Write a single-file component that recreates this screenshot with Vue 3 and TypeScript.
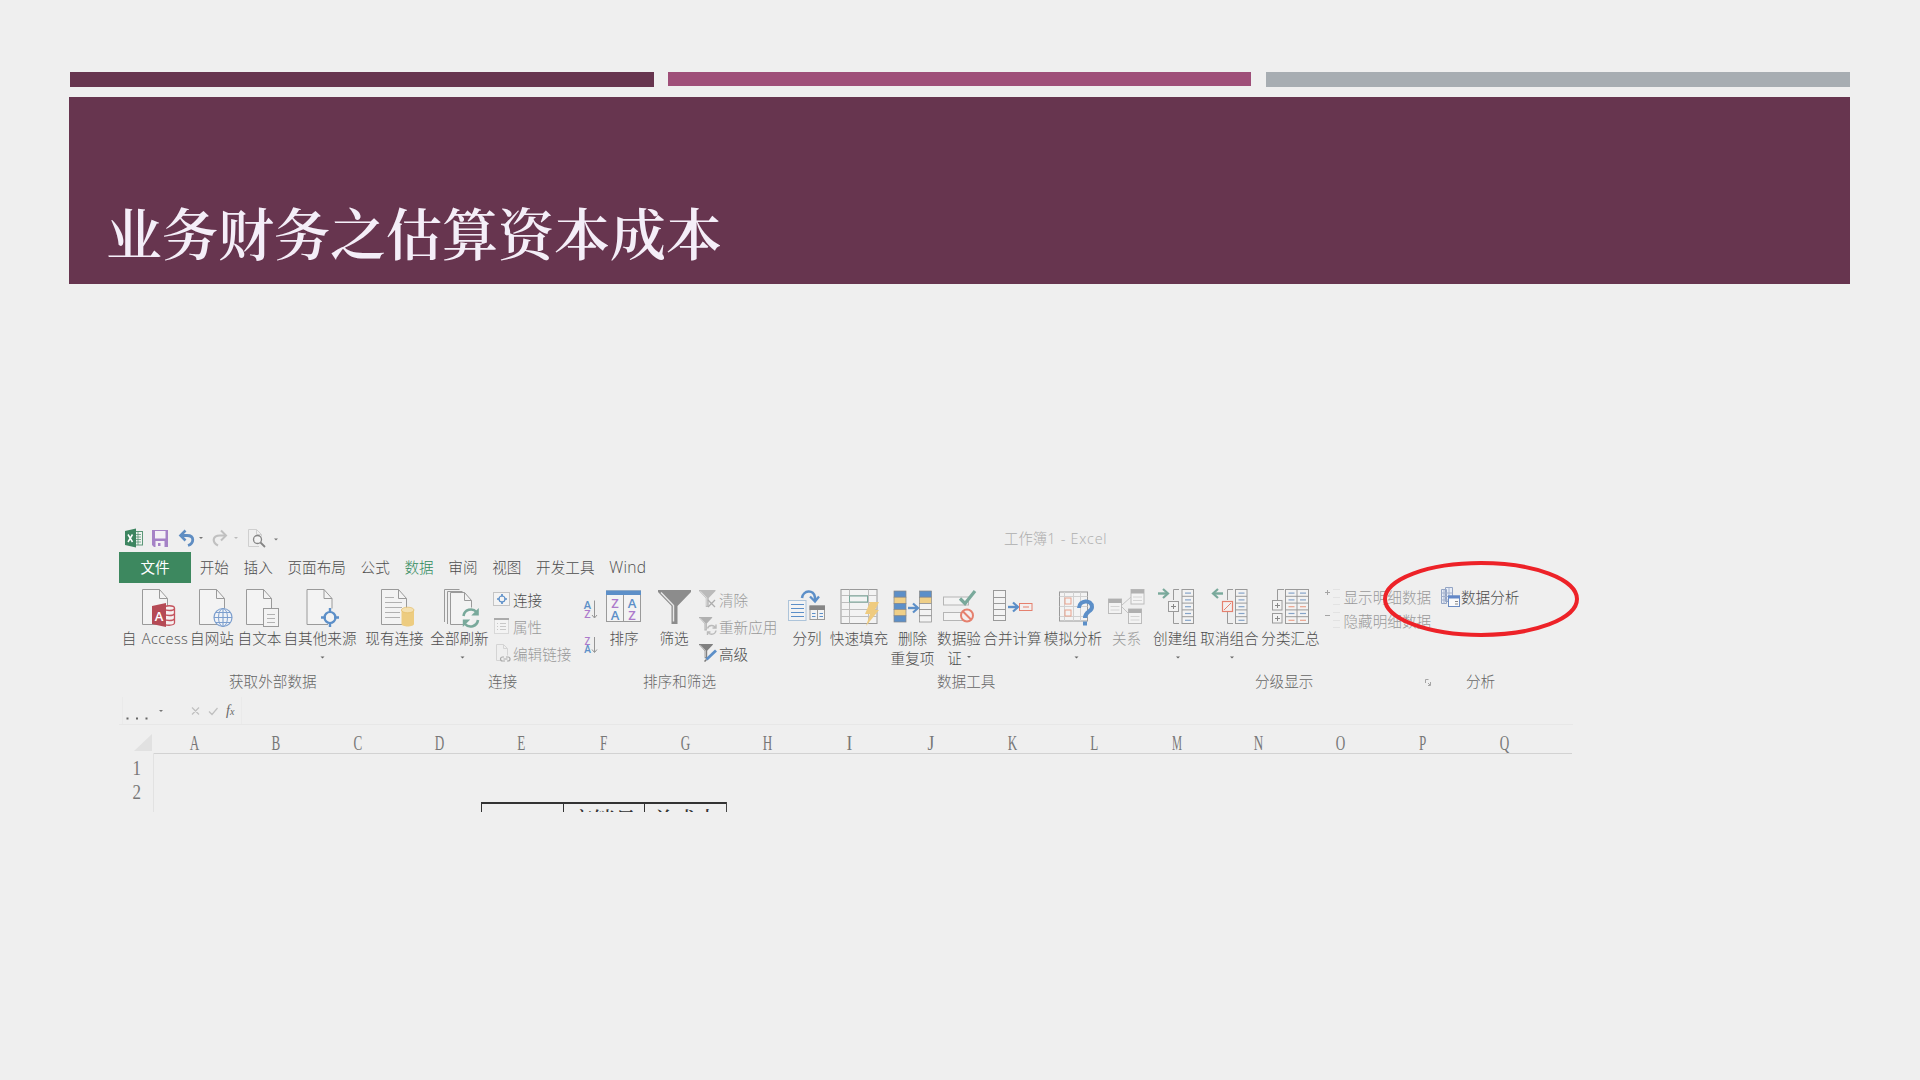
<script setup lang="ts">
interface Tool {
  x: number
  w: number
  label: string
  second?: string
  caret?: number
  dim?: boolean
  icon: string
}
interface SmallTool {
  label: string
  dim?: boolean
  icon: string
}

const GREY = '#9a9a9a'
const BLUE = '#5c8fc8'
const TEAL = '#79a99b'
const RED = '#e5806e'

const line = (d: string, color: string, width = 1) =>
  `<path d="${d}" fill="none" stroke="${color}" stroke-width="${width}"/>`
const box = (x: number, y: number, w: number, h: number, stroke: string, fill = '#f3f3f3', sw = 1) =>
  `<rect x="${x}" y="${y}" width="${w}" height="${h}" fill="${fill}" stroke="${stroke}" stroke-width="${sw}"/>`
const sheet = (x: number) =>
  `<path d="M${x} 589.5h17l8 9v26h-25z" fill="#f3f3f3" stroke="none"/>` +
  line(`M${x + 21} 624.5H${x}V589.5h17l8 9v10M${x + 17} 589.5v9h8`, GREY)
const letter = (ch: string, x: number, y: number, size: number, color: string) =>
  `<text x="${x}" y="${y}" font-family="Open Sans, sans-serif" font-size="${size}" font-weight="600" text-anchor="middle" fill="${color}">${ch}</text>`

const PURPLE = '#ac7acb'

const rowsBlock = (x: number, cols: number, colors: string[]) => {
  let s = box(x, 589.5, 11.5 * cols, 34, GREY)
  for (let i = 0; i < 5; i++) {
    const y = 589.5 + i * 6.8
    s += line(`M${x} ${y}h${11.5 * cols}`, GREY)
    for (let c = 0; c < cols; c++) s += line(`M${x + 3 + c * 11.5} ${y + 3.6}h6`, colors[i], 1.2)
  }
  return cols > 1 ? s + line(`M${x + 11.5} 589.5v34`, GREY) : s
}

const external: Tool[] = [
  {
    x: 122, w: 66, label: '自 Access',
    icon: sheet(142.5) +
      `<path d="M164 608v15c0 3 10 3 10.500 0v-15c0-3-10.500-3-10.500 0z" fill="#f5f0f0" stroke="#c4545e" stroke-width="1.300"/>` +
      line('M164 609c2 2 9 2 10.500 0M164 614c2 2 9 2 10.500 0M164 619c2 2 9 2 10.500 0', '#c4545e', 1.5) +
      `<path d="M152 606l14-3v24l-14-3z" fill="#b54a55"/>` + letter('A', 159, 620.5, 13, '#fff'),
  },
  {
    x: 188, w: 48, label: '自网站',
    icon: sheet(199.5) + `<circle cx="223" cy="617.500" r="9" fill="#f0f3f7" stroke="#7d9fce" stroke-width="1.200"/><ellipse cx="223" cy="617.500" rx="4.500" ry="9" fill="none" stroke="#7d9fce"/>` +
      line('M214 617.5h18M223 608.5v18M215.500 612.500h15M215.500 622.500h15', '#7d9fce', 1.1),
  },
  {
    x: 236, w: 47, label: '自文本',
    icon: sheet(246.5) + box(263.5, 608.5, 15, 18, GREY) + line('M267 614.5h8M267 618.500h8M267 622.500h8', '#b2b2b2'),
  },
  {
    x: 283, w: 74, label: '自其他来源', caret: 322.5,
    icon: sheet(307) + `<circle cx="330" cy="617.500" r="5.500" fill="#f3f3f3" stroke="${BLUE}" stroke-width="2.200"/>` +
      line('M330 608v5M330 622v5M321 617.500h5M334 617.500h5', BLUE, 2.4),
  },
  {
    x: 357, w: 75, label: '现有连接',
    icon: sheet(381.5) + line('M385 597.500h9M385 602.500h17M385 607.500h17M385 612.500h15M385 617.500h15', '#b0b0b0') +
      `<path d="M401.500 610v14c0 3.300 12.500 3.300 12.500 0v-14z" fill="#edcc80"/><ellipse cx="407.700" cy="610" rx="6.300" ry="2.800" fill="#f4e0b0" stroke="#e5bd65" stroke-width=".7"/>`,
  },
  {
    x: 432, w: 55, label: '全部刷新', caret: 462.5,
    icon: line('M444.500 622V589.500h15M447.500 624V591.500h15', GREY) +
      `<path d="M450.500 593.500h14l7 8v23h-21z" fill="#f3f3f3"/>` + line('M463 624.500H450.500V592.500h14l7 8v7M464.500 592.500v8h7', GREY) +
      line('M463.500 616a7.500 7.500 0 0 1 13-4M478 620a7.500 7.500 0 0 1-13 4', TEAL, 2.6) +
      `<path d="M478.800 608v7.500h-7.500zM462.800 627v-7.500h7.500z" fill="${TEAL}"/>`,
  },
]

const funnel = (x: number, y: number, s: number, color: string) =>
  `<path d="M${x} ${y}h${33 * s}v${2 * s}l${-13.5 * s} ${14 * s}v${18 * s}h${-6 * s}v${-18 * s}l${-13.5 * s} ${-14 * s}z" fill="${color}"/>` +
  line(`M${x + 3 * s} ${y + 2.5 * s}l${12.5 * s} ${13 * s}v${16 * s}`, '#e8e8e8', 1.4 * s)

const links: SmallTool[] = [
  {
    label: '连接',
    icon: box(0.5, 2.5, 16, 13, '#c4c4c4') + `<circle cx="9" cy="9" r="3" fill="none" stroke="${BLUE}" stroke-width="1.100"/>` +
      line('M9 4v2.500M9 11.500v2.500M4 9h2.500M11.500 9h2.500', BLUE, 1.7),
  },
  { label: '属性', dim: true, icon: box(1.5, 1.5, 14, 15, '#d8d8d8') + line('M1 2h15', '#ababab', 2) + line('M4 6.500h1M7 6.500h6M4 9.500h1M7 9.500h6M4 12.500h1M7 12.500h6', '#c8c8c8') },
  { label: '编辑链接', dim: true, icon: line('M7 16.500H3.500V.5h7l4 4v7M10.500 .5v4h4', '#d4d4d4') + line('M11 13H9.500a2 2 0 0 0 0 4H12M13 13h2a2 2 0 0 1 0 4h-1M10.500 15h4', '#a9a9a9', 1.2) },
]
const filters: SmallTool[] = [
  { label: '清除', dim: true, icon: funnel(0, 0, 0.5, '#bababa') + line('M9 10l7 7M16 10l-7 7', '#adadad', 1.3) },
  { label: '重新应用', dim: true, icon: funnel(0, 0, 0.4, '#b0b0b0') + line('M8.500 11.500a4.300 4.300 0 0 1 8-.5M17 13.500a4.300 4.300 0 0 1-8 1.500M17 7.500v3.500h-3.500M8.500 18v-3h3', '#bababa', 1.4) },
  { label: '高级', icon: funnel(0, 0, 0.42, '#808080') + line('M7.500 15.500L17 6.500', BLUE, 2.8) + line('M5.500 17.500l2-2', '#777', 1.5) },
]

const sorters: Tool[] = [
  {
    x: 600, w: 48, label: '排序',
    icon: box(606.5, 591, 34, 30.500, '#9a9a9a') + `<rect x="606" y="590.500" width="35" height="4.500" fill="${BLUE}"/>` + line('M623.500 595v26.500', '#9a9a9a') +
      `<g font-weight="400">` + letter('Z', 615, 607.5, 13, PURPLE) + letter('A', 615, 619.5, 13, BLUE) + letter('A', 632, 607.5, 13, BLUE) + letter('Z', 632, 619.5, 13, PURPLE) + `</g>`,
  },
  { x: 648, w: 52, label: '筛选', icon: funnel(658, 590, 1, '#8c8c8c') },
]

const arrow = (x: number, y: number, color: string, dir = 1) =>
  line(`M${x} ${y}h${10 * dir}`, color, 2.4) + line(`M${x + 5 * dir} ${y - 4.5}l${5 * dir} 4.500l${-5 * dir} 4.500`, color, 2.2)

const stripes = (x: number, fills: string[]) =>
  fills.map((f, i) => box(x, 591 + i * 6.2, 12, 6.2, '#888', f, 0.7)).join('')

const dataTools: Tool[] = [
  {
    x: 785, w: 44, label: '分列',
    icon: box(788.5, 600.5, 17.5, 20, '#adc4da') + line('M791 604.500h13M791 608.500h13M791 612.500h13M791 616.500h13', BLUE, 1.1) +
      box(810, 606, 14.500, 13.500, GREY) + `<rect x="809.500" y="605.500" width="15.500" height="4.500" fill="#858585"/>` + line('M817.500 610v9', GREY) + line('M812 613.500h3.500M819.500 613.500h3.500M812 616.500h3.500M819.500 616.500h3.500', BLUE) +
      line('M802 598c1-8 12-9 13-.5v3', BLUE, 2.6) + line('M810 596.500l5 5 4-5', BLUE, 2.3),
  },
  {
    x: 829, w: 60, label: '快速填充',
    icon: box(841, 589.500, 36, 34, GREY) + line('M841 595.500h36M841 602.500h36M841 609.500h36M841 616.500h36M849.500 589.500v34M868.500 589.500v34', '#bdbdbd') +
      box(849.5, 596, 18, 6, TEAL) + `<path d="M870 602h9l-4 8h4l-13 16 4-12h-5z" fill="#efcb7f"/>`,
  },
  {
    x: 889, w: 47, label: '删除', second: '重复项',
    icon: stripes(894, [BLUE, '#efcf88', BLUE, '#efcf88', BLUE]) + stripes(919.5, [BLUE, '#efcf88', '#f3f3f3', '#f3f3f3', '#f3f3f3']) + arrow(908, 608, BLUE),
  },
  {
    x: 936, w: 46, label: '数据验', second: '证',
    icon: box(943.5, 597, 25, 8, '#b5b5b5') + box(943.5, 612.5, 25, 8, '#b5b5b5') + line('M960 598.500l5 5L975 591', TEAL, 3.2) +
      `<circle cx="967" cy="615.500" r="6" fill="#f4eeee" stroke="${RED}" stroke-width="2"/>` + line('M963 611.500l8 8', RED, 2),
  },
  {
    x: 982, w: 61, label: '合并计算',
    icon: box(993.5, 590.5, 12, 30, GREY) + line('M993.500 597.500h12M993.500 603.500h12M993.500 609.500h12M993.500 615.500h12', GREY) + arrow(1008, 607, BLUE) +
      box(1019.5, 603.5, 12.5, 7, RED, '#f3efee', 1) + line('M1023 607h6', RED),
  },
  {
    x: 1043, w: 60, label: '模拟分析', caret: 1076.5,
    icon: box(1059.5, 592, 28, 29, GREY) + line('M1059.500 596.500h28M1059.500 606.500h28M1059.500 616.500h28M1064.500 592v29M1073.500 592v29M1080.500 592v29', '#d0d0d0') +
      box(1065, 598, 6, 6, '#eaa28c') + box(1065, 610, 6, 6, '#eaa28c') + line('M1079 608c0-8 13-9 13-1 0 5-7 4-7 11', BLUE, 4) + `<rect x="1083" y="621.500" width="4" height="4" fill="${BLUE}"/>`,
  },
  {
    x: 1103, w: 47, label: '关系', dim: true,
    icon: [[1108.5, 599], [1131, 589.5], [1128.5, 609]].map(([x, y]) => box(x, y, 13, 14.5, '#bcbcbc') + `<rect x="${x}" y="${y}" width="13" height="4" fill="#b0b0b0"/>` + line(`M${x + 2} ${y + 7.5}h9M${x + 2} ${y + 11}h9`, '#d4d4d4')).join('') +
      line('M1122 605l9-8M1122 607l7 7', '#c4c4c4'),
  },
]

const B = '#84a3c8'
const outline: Tool[] = [
  {
    x: 1150, w: 50, label: '创建组', caret: 1178,
    icon: arrow(1158, 593.5, TEAL) + line('M1179 589.500h-5.500V600M1179 623.500h-5.500V612', GREY) + box(1168.5, 601.5, 10, 10, GREY) + line('M1171 606.500h5M1173.500 604v5', '#888') + rowsBlock(1182, 1, [B, B, B, B, B]),
  },
  {
    x: 1200, w: 59, label: '取消组合', caret: 1232,
    icon: arrow(1223, 593.5, TEAL, -1) + line('M1233 589.500h-5.500V600M1233 623.500h-5.500V612', GREY) + box(1222.5, 601.5, 10, 10, RED, '#f3efee', 1.2) + line('M1224 610l7-7', RED) + rowsBlock(1235.5, 1, [B, B, B, B, B]),
  },
  {
    x: 1259, w: 63, label: '分类汇总',
    icon: line('M1284 589.500h-6.500V600', GREY) + box(1272.5, 600.5, 9.5, 9.5, GREY) + box(1272.5, 613.5, 9.5, 9.5, GREY) + line('M1275 605.500h5M1277.500 603v5M1275 618.500h5M1277.500 616v5', '#888') + rowsBlock(1285.5, 2, [B, B, '#eaa28c', B, '#eaa28c']),
  },
]

const details: SmallTool[] = [
  { label: '显示明细数据', dim: true, icon: line('M1 4.500h5M3.500 2v5', '#a5a5a5') + line('M9 1.500h7M9 9.500h7M9 16.500h7', '#e2e2e2') },
  { label: '隐藏明细数据', dim: true, icon: line('M1 4.500h5', '#a5a5a5') + line('M9 1.500h7M9 9.500h7M9 16.500h7', '#e2e2e2') },
]

const tabs = ['开始', '插入', '页面布局', '公式', '数据', '审阅', '视图', '开发工具', 'Wind']
const groups = [
  { name: '获取外部数据', left: 229, w: 259 },
  { name: '连接', left: 488, w: 155 },
  { name: '排序和筛选', left: 643, w: 294 },
  { name: '数据工具', left: 937, w: 318 },
  { name: '分级显示', left: 1255, w: 169 },
]
const columns = 'ABCDEFGHIJKLMNOPQ'.split('')
const squeeze = (c: string) => (c === 'I' || c === 'J' ? 0.85 : c === 'M' ? 0.55 : 0.64)
const toolRuns: { key: string; tools?: Tool[]; small?: SmallTool[] }[] = [
  { key: 'external', tools: external },
  { key: 'links', small: links },
  { key: 'az' },
  { key: 'sorters', tools: sorters },
  { key: 'filters', small: filters },
  { key: 'data', tools: dataTools },
  { key: 'outline', tools: outline },
  { key: 'details', small: details },
]
const sortIcons =
  letter('A', 587.5, 608.5, 11, BLUE) + letter('Z', 587.5, 618, 11, PURPLE) + line('M594.500 600.500v17M592 615l2.500 3 2.500-3', '#959595') +
  letter('Z', 587.5, 644.5, 10, PURPLE) + letter('A', 587.5, 653, 10, BLUE) + line('M594.500 637v15M592 649.500l2.500 3 2.500-3', '#959595')
</script>

<template>
  <main class="slide">
    <div class="accents"><i class="plum"></i><i class="rose"></i><i class="steel"></i></div>
    <header class="banner"><h1>业务财务之估算资本成本</h1></header>

    <section class="excel">
      <div class="quick">
        <svg width="170" height="30" viewBox="119 522 170 30">
          <rect x="132.500" y="531.500" width="10" height="13.500" fill="#eef3ef" stroke="#5b9677" />
          <path d="M134 534.500h7M134 537h7M134 539.500h7M134 542h7M138 532v13" stroke="#5b9677" fill="none" stroke-width=".8" />
          <path d="M125 531l11-2.500v19l-11-2.500z" fill="#3d8560" />
          <path d="M128 534.500l4.500 7.500M132.500 534.500l-4.500 7.500" stroke="#fff" stroke-width="1.500" />
          <path d="M152 530h16v17h-14l-2-2z" fill="#a582c6" />
          <path d="M155 531h10.500v7.500H155zM155.500 541h9v6h-9z" fill="#f3f0f5" /><rect x="158" y="543" width="2.500" height="3" fill="#a582c6" />
          <path d="M180 535.500h7c8 0 7 8 1 10" fill="none" stroke="#5f8dc2" stroke-width="2.800" /><path d="M185.500 530.500l-5 5 5 5" fill="none" stroke="#5f8dc2" stroke-width="2.600" />
          <path d="M226 535.500h-6c-8 0-8 7-2 10" fill="none" stroke="#c0c0c0" stroke-width="2.200" /><path d="M221 530.500l5 5-5 5" fill="none" stroke="#c0c0c0" stroke-width="2" />
          <path d="M199 537h4l-2 2zM274 538.500h4l-2 2z" fill="#777" /><path d="M234 537h4l-2 2z" fill="#bbb" />
          <path d="M259 546.500h-10.500v-17h8l5 5v2M256.500 529.500v5h5" fill="none" stroke="#cfcfcf" />
          <circle cx="257.500" cy="539.500" r="4" fill="#f3f3f3" stroke="#858585" stroke-width="1.300" /><path d="M260.500 542.500l4.500 4.500" stroke="#858585" stroke-width="1.800" />
        </svg>
        <span class="doc-title">工作簿<b>1 - Excel</b></span>
      </div>

      <nav class="tabs">
        <span class="file">文件</span>
        <span v-for="t in tabs" :key="t" :class="{ active: t === '数据', latin: t === 'Wind' }">{{ t }}</span>
      </nav>

      <div class="ribbon">
        <template v-for="run in toolRuns" :key="run.key">
          <template v-if="run.tools">
            <div v-for="t in run.tools" :key="t.label" class="tool" :class="{ dim: t.dim }" :style="{ width: t.w + 'px' }">
              <svg :width="t.w" height="46" :viewBox="`${t.x} 583 ${t.w} 46`" v-html="t.icon"></svg>
              <span :class="{ access: t.label === '自 Access' }">{{ t.label }}</span>
              <span v-if="t.second" class="second">{{ t.second }}<b v-if="t.second === '证'" class="caret"></b></span>
              <svg v-if="t.caret" :width="t.w" height="20" :viewBox="`${t.x} 648 ${t.w} 20`"><path :d="`M${t.caret - 2} 656.500h4l-2 2z`" fill="#666" /></svg>
            </div>
          </template>
          <div v-else-if="run.small" class="stack" :class="run.key">
            <div v-for="s in run.small" :key="s.label" class="small" :class="{ dim: s.dim }">
              <svg width="18" height="18" viewBox="0 0 18 18" v-html="s.icon"></svg><span>{{ s.label }}</span>
            </div>
          </div>
          <svg v-else width="25" height="85" viewBox="575 583 25 85" v-html="sortIcons"></svg>
        </template>
        <div class="analysis">
          <svg width="21" height="22" viewBox="0 0 21 22">
            <path d="M1.500 2.500h5v14h-5zM5.500 .500h7v14h-7z" fill="#e7edf7" stroke="#93a4c4" />
            <path d="M1.500 6h11M1.500 9.500h11M1.500 13h11M9 .5v14M4 2.500v14" stroke="#a3b1cc" fill="none" />
            <rect x="8.500" y="9" width="11" height="10.500" fill="#fafafa" stroke="#6a8bc2" /><path d="M8 10h12" stroke="#6388c8" stroke-width="3" />
            <path d="M15 14.500h3M15 17h3" stroke="#888" />
          </svg><span>数据分析</span>
        </div>
      </div>

      <div class="groups">
        <span v-for="g in groups" :key="g.name" :style="{ width: g.w + 'px' }">{{ g.name }}</span>
        <svg width="42" height="20" viewBox="0 0 42 20"><path d="M1.500 12V8.500h3M6.500 11v3.500H4M4 12l2 2" fill="none" stroke="#a5a5a5" /></svg>
        <span>分析</span>
      </div>

      <div class="formula">
        <svg width="140" height="30" viewBox="119 695 140 30">
          <path d="M126.500 717.500h2v2h-2zM136 717.500h2v2h-2zM145.500 717.500h2v2h-2z" fill="#666" /><path d="M159 710h4l-2 2z" fill="#777" />
          <path d="M192 707.500l7 7M199 707.500l-7 7M209 711.500l3 3 5.500-6.500" fill="none" stroke="#c0c0c0" stroke-width="1.200" />
          <path d="M122.500 697v27M241.500 697v27" stroke="#eaeaea" />
          <text x="226" y="715" font-family="Liberation Serif, serif" font-style="italic" font-size="14" fill="#666">f<tspan font-size="10">x</tspan></text>
        </svg>
      </div>

      <div class="heads">
        <div class="corner"><svg width="18" height="17" viewBox="0 0 18 17"><path d="M18 0v17H0z" fill="#e1e1e1" /></svg></div>
        <span v-for="c in columns" :key="c"><em :style="{ transform: `scaleX(${squeeze(c)})` }">{{ c }}</em></span>
      </div>
      <div class="sheet">
        <div class="numbers"><em>1</em><em>2</em></div>
        <div class="cells"><div class="table"><span></span><span>产销量</span><span>总成本</span></div></div>
      </div>

      <svg class="ring" width="200" height="80" viewBox="0 0 200 80"><ellipse cx="100" cy="40" rx="96" ry="36" fill="none" stroke="#ed2228" stroke-width="4" /></svg>
    </section>
  </main>
</template>

<style>
body {
  margin: 0;
  background: #efefef;
}
</style>

<style scoped>
.slide {
  box-sizing: border-box;
  width: 1920px;
  height: 1080px;
  padding: 72px 70px 0 69px;
  overflow: hidden;
  background: #efefef;
  font-family: 'Open Sans', 'Noto Sans CJK SC', sans-serif;
}
.accents {
  display: flex;
  height: 25px;
  padding-left: 1px;
}
.accents i { height: 15px; width: 584px; }
.plum { background: #67354f; }
.accents .rose { background: #9f4f79; height: 14px; width: 583px; margin: 0 15px 0 14px; }
.steel { background: #a7adb2; }
.banner {
  height: 187px;
  background: #67354f;
}
h1 {
  margin: 0;
  padding: 94px 0 0 37px;
  font: 600 56px/80px 'Noto Serif CJK SC', 'Noto Sans CJK SC', serif;
  color: #f4eef8;
}
.excel {
  position: relative;
  width: 1470px;
  margin: 238px 0 0 50px;
  font-size: 14.6px;
  font-weight: 300;
  color: #4d4d4d;
}
svg { display: block; flex: none; }
.quick { display: flex; height: 30px; }
.doc-title {
  margin-left: 715px;
  line-height: 34px;
  font-size: 14.4px;
  color: #adadad;
  white-space: nowrap;
}
.doc-title b { font-weight: 300; letter-spacing: 0.75px; }
.tabs {
  display: flex;
  gap: 14.7px;
  height: 31px;
  line-height: 31px;
  white-space: nowrap;
}
.tabs .file {
  width: 72px;
  margin-right: -6px;
  background: #3d885f;
  color: #fff;
  font-weight: 400;
  text-align: center;
}
.tabs .active { color: #2f8a5c; }
.tabs .latin { font-size: 15.6px; letter-spacing: 0.3px; }
.ribbon {
  display: flex;
  height: 88px;
  padding-left: 3px;
}
.tool {
  display: flex;
  flex: none;
  flex-direction: column;
  align-items: center;
  white-space: nowrap;
}
.tool span { line-height: 19px; height: 19px; flex: none; }
.tool .access { letter-spacing: 0.35px; word-spacing: 1px; }
.tool .second { position: relative; line-height: 20px; height: 20px; }
.caret {
  position: absolute;
  left: 20px;
  top: 8px;
  border: 2px solid transparent;
  border-top-color: #666;
}
.tool:has(.caret) .second { margin-right: 9px; }
.dim { color: #999; }
.stack { flex: none; box-sizing: border-box; }
.small { display: flex; align-items: center; height: 27.2px; white-space: nowrap; }
.small span { margin-left: 2px; }
.links { width: 88px; padding: 2.5px 0 0 6px; }
.filters { width: 85px; padding-top: 2.5px; }
.filters .small svg { margin-left: -1px; }
.details { width: 118px; padding: 2px 0 0 2px; }
.details .small { height: 23.5px; }
.details .small span { margin-left: 1.5px; }
.analysis { display: flex; height: 29px; white-space: nowrap; line-height: 28px; }
.analysis svg { margin-top: 4px; }
.groups {
  display: flex;
  height: 24px;
  padding-left: 110px;
  line-height: 20px;
  white-space: nowrap;
  color: #666;
}
.groups span { flex: none; }
.formula {
  height: 29px;
  border-bottom: 1px solid #e7e7e7;
  width: 1454px;
}
.heads {
  display: flex;
  width: 1454px;
  height: 28px;
}
.corner { flex: none; width: 34px; padding-top: 9px; box-sizing: border-box; height: 28px; }
.corner svg { margin-left: 15px; }
.heads span {
  flex: none;
  width: 81.9px;
  text-align: center;
  line-height: 38px;
  height: 28px;
  border-bottom: 1px solid #d2d2d2;
}
.heads span:last-child { width: 109px; text-align: left; text-indent: 34px; }
em {
  display: inline-block;
  font: 400 20.5px/1 'Liberation Serif', serif;
  color: #777;
  text-indent: 0;
}
.sheet { display: flex; height: 59px; overflow: hidden; }
.numbers {
  box-sizing: border-box;
  flex: none;
  width: 35px;
  padding: 5px 0 0 13px;
  border-right: 1px solid #e2e2e2;
}
.numbers em { display: block; height: 24px; font-size: 20px; transform: scaleX(0.85); transform-origin: 4px; }
.cells { padding: 49px 0 0 327px; }
.table { display: flex; border-right: 1.500px solid #444; }
.table span {
  box-sizing: border-box;
  width: 81.500px;
  height: 34px;
  border-top: 2px solid #333;
  border-left: 1.500px solid #333;
  font-family: 'Noto Serif CJK SC', 'Noto Sans CJK SC', serif;
  font-size: 22px;
  font-weight: 500;
  line-height: 30px;
  text-align: center;
  color: #333;
}
.ring { position: absolute; left: 1262px; top: 37px; }
</style>
